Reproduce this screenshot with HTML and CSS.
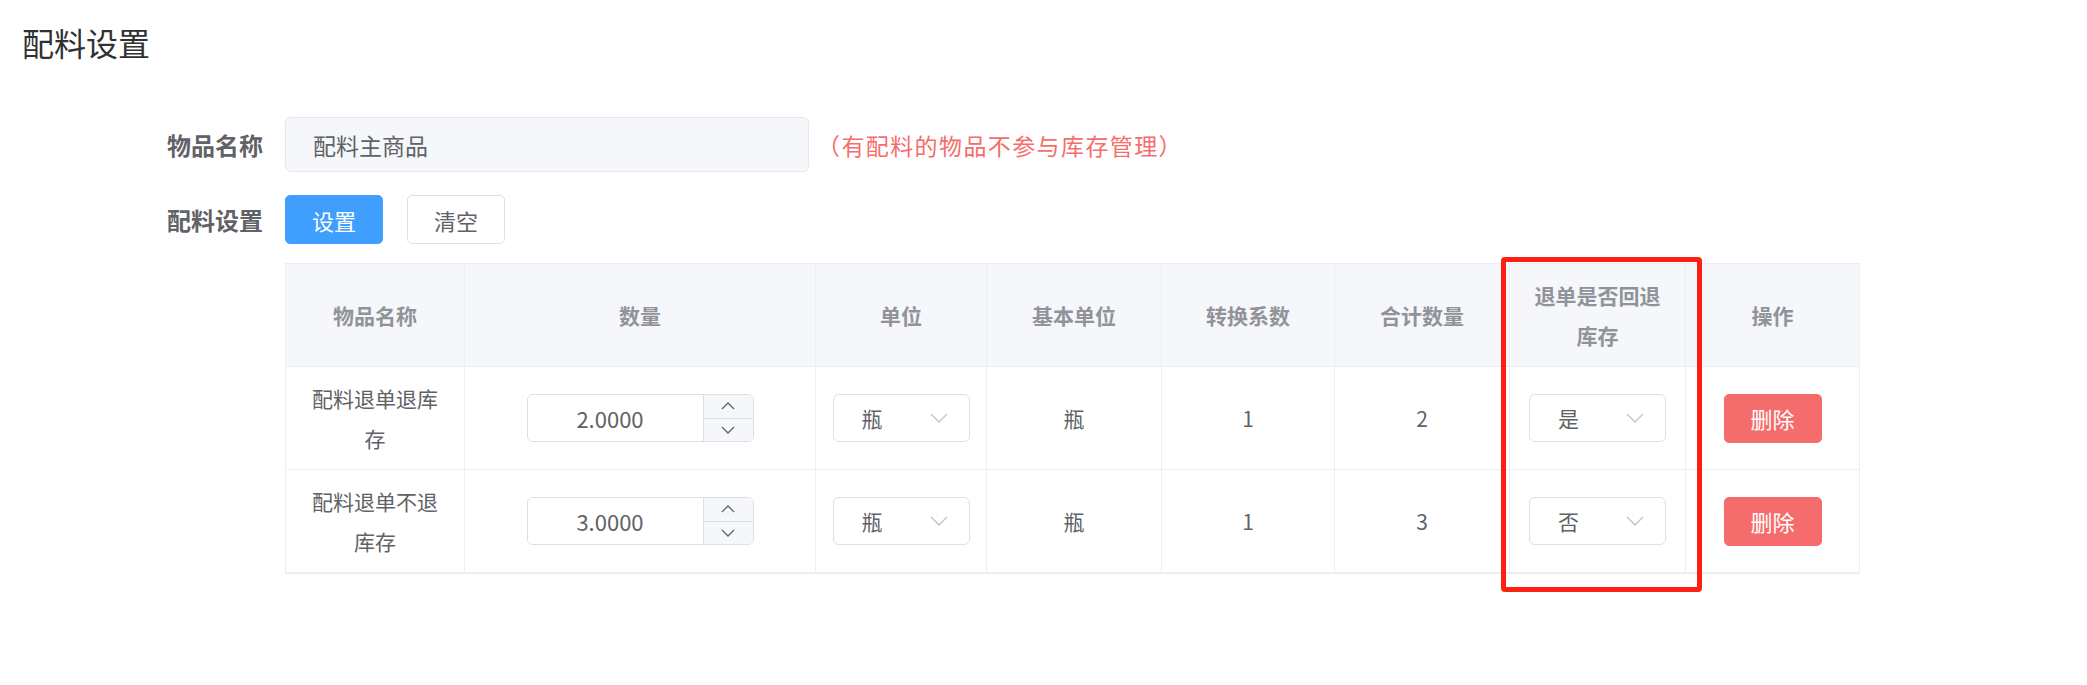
FILE: index.html
```html
<!DOCTYPE html>
<html lang="zh-CN">
<head>
    <meta charset="UTF-8">
    <meta name="viewport" content="width=device-width, initial-scale=1.0">
    <title>配料设置</title>
    <link rel="stylesheet" href="styles.css">
</head>
<body>
    <div class="page">
        <h2 class="page-title">配料设置</h2>
        <div class="form">
            <div class="form-row">
                <label class="form-label">物品名称</label>
                <div class="form-field">
                    <input class="text-input" type="text" value="配料主商品" readonly>
                    <span class="hint">（有配料的物品不参与库存管理）</span>
                </div>
            </div>
            <div class="form-row row-buttons">
                <label class="form-label">配料设置</label>
                <div class="form-field">
                    <button class="btn btn-primary">设置</button>
                    <button class="btn btn-plain">清空</button>
                </div>
            </div>
            <div class="form-row row-table">
                <div class="form-label"></div>
                <div class="table-wrap">
                    <table class="grid">
                        <colgroup>
                            <col style="width:179px">
                            <col style="width:351px">
                            <col style="width:171px">
                            <col style="width:175px">
                            <col style="width:173px">
                            <col style="width:175px">
                            <col style="width:176px">
                            <col style="width:174px">
                        </colgroup>
                        <thead>
                            <tr>
                                <th>物品名称</th>
                                <th>数量</th>
                                <th>单位</th>
                                <th>基本单位</th>
                                <th>转换系数</th>
                                <th>合计数量</th>
                                <th>退单是否回退库存</th>
                                <th>操作</th>
                            </tr>
                        </thead>
                        <tbody>
                            <tr>
                                <td>配料退单退库存</td>
                                <td>
                                    <div class="number-input">
                                        <input type="text" value="2.0000" readonly>
                                        <div class="stepper">
                                            <span class="step"><svg width="14" height="8" viewBox="0 0 14 8"><polyline points="1,7 7,1 13,7" /></svg></span>
                                            <span class="step"><svg width="14" height="8" viewBox="0 0 14 8"><polyline points="1,1 7,7 13,1" /></svg></span>
                                        </div>
                                    </div>
                                </td>
                                <td>
                                    <div class="select"><span>瓶</span><svg width="18" height="10" viewBox="0 0 18 10"><polyline points="1,1 9,9 17,1" /></svg></div>
                                </td>
                                <td>瓶</td>
                                <td>1</td>
                                <td>2</td>
                                <td>
                                    <div class="select"><span>是</span><svg width="18" height="10" viewBox="0 0 18 10"><polyline points="1,1 9,9 17,1" /></svg></div>
                                </td>
                                <td><button class="btn btn-danger">删除</button></td>
                            </tr>
                            <tr>
                                <td>配料退单不退库存</td>
                                <td>
                                    <div class="number-input">
                                        <input type="text" value="3.0000" readonly>
                                        <div class="stepper">
                                            <span class="step"><svg width="14" height="8" viewBox="0 0 14 8"><polyline points="1,7 7,1 13,7" /></svg></span>
                                            <span class="step"><svg width="14" height="8" viewBox="0 0 14 8"><polyline points="1,1 7,7 13,1" /></svg></span>
                                        </div>
                                    </div>
                                </td>
                                <td>
                                    <div class="select"><span>瓶</span><svg width="18" height="10" viewBox="0 0 18 10"><polyline points="1,1 9,9 17,1" /></svg></div>
                                </td>
                                <td>瓶</td>
                                <td>1</td>
                                <td>3</td>
                                <td>
                                    <div class="select"><span>否</span><svg width="18" height="10" viewBox="0 0 18 10"><polyline points="1,1 9,9 17,1" /></svg></div>
                                </td>
                                <td><button class="btn btn-danger">删除</button></td>
                            </tr>
                        </tbody>
                    </table>
                    <div class="highlight"></div>
                </div>
            </div>
        </div>
    </div>
</body>
</html>
```

FILE: styles.css
```css
:root {
    --primary: #409eff;
    --danger: #f56c6c;
    --text-main: #303133;
    --text-regular: #606266;
    --text-secondary: #909399;
    --border: #dcdfe6;
    --border-light: #ebeef5;
    --fill: #f5f7fa;
}
* {
    box-sizing: border-box;
}
body {
    margin: 0;
    min-height: 100vh;
    background: #fff;
    font-family: "Noto Sans CJK SC", "Noto Sans", sans-serif;
    color: var(--text-regular);
}
.page {
    padding: 20px 0 60px 22px;
}
.page-title {
    margin: 0;
    font-size: 32px;
    font-weight: 400;
    line-height: 44px;
    color: var(--text-main);
}
.form {
    margin-top: 53px;
    margin-left: 118px;
}
.form-row {
    display: flex;
    align-items: center;
}
.row-buttons {
    margin-top: 23px;
}
.row-table {
    margin-top: 19px;
    align-items: flex-start;
}
.form-label {
    width: 145px;
    flex: none;
    padding-right: 22px;
    text-align: right;
    font-size: 24px;
    font-weight: 700;
    color: var(--text-regular);
}
.form-field {
    display: flex;
    align-items: center;
}
.text-input {
    width: 524px;
    height: 55px;
    padding: 0 0 0 27px;
    border: 1px solid #e4e7ed;
    border-radius: 6px;
    background: var(--fill);
    font-family: inherit;
    font-size: 23px;
    color: var(--text-regular);
    outline: none;
}
.hint {
    margin-left: 8px;
    font-size: 23px;
    letter-spacing: 1.4px;
    color: var(--danger);
}
.btn {
    height: 49px;
    width: 98px;
    padding: 0;
    border: 1px solid var(--border);
    border-radius: 5px;
    background: #fff;
    font-family: inherit;
    font-size: 22px;
    color: var(--text-regular);
    cursor: pointer;
}
.btn + .btn {
    margin-left: 24px;
}
.btn-primary {
    background: var(--primary);
    border-color: var(--primary);
    color: #fff;
}
.btn-danger {
    background: var(--danger);
    border-color: var(--danger);
    color: #fff;
}
.table-wrap {
    position: relative;
}
.grid {
    width: 1574px;
    border-collapse: collapse;
    table-layout: fixed;
    font-size: 21px;
}
.grid th,
.grid td {
    border: 1px solid var(--border-light);
    padding: 11px 16px;
    line-height: 40px;
    text-align: center;
    vertical-align: middle;
}
.grid th {
    background: var(--fill);
    color: var(--text-secondary);
    font-weight: 700;
}
.grid td {
    color: var(--text-regular);
}
.grid tbody tr:last-child td {
    border-bottom-width: 2px;
}
.number-input {
    display: inline-flex;
    width: 227px;
    height: 48px;
    border: 1px solid var(--border);
    border-radius: 6px;
    overflow: hidden;
    vertical-align: middle;
}
.number-input input {
    flex: 1;
    min-width: 0;
    padding: 0 10px 0 0;
    border: none;
    outline: none;
    text-align: center;
    font-family: inherit;
    font-size: 22px;
    color: var(--text-regular);
    background: #fff;
}
.stepper {
    width: 50px;
    display: flex;
    flex-direction: column;
    border-left: 1px solid var(--border);
    background: var(--fill);
}
.step {
    flex: 1;
    display: flex;
    align-items: center;
    justify-content: center;
}
.step + .step {
    border-top: 1px solid var(--border);
}
.step svg polyline {
    fill: none;
    stroke: var(--text-regular);
    stroke-width: 1.3;
}
.select {
    display: inline-flex;
    align-items: center;
    justify-content: space-between;
    width: 137px;
    height: 48px;
    padding: 0 21px 0 28px;
    border: 1px solid var(--border);
    border-radius: 6px;
    background: #fff;
    vertical-align: middle;
    font-size: 21px;
    line-height: 1;
    color: var(--text-regular);
}
.select svg polyline {
    fill: none;
    stroke: #c0c4cc;
    stroke-width: 1.4;
}
.highlight {
    position: absolute;
    left: 1216px;
    top: -6px;
    width: 201px;
    height: 335px;
    border: 5px solid #fe1f14;
    border-radius: 4px;
    pointer-events: none;
}
```
